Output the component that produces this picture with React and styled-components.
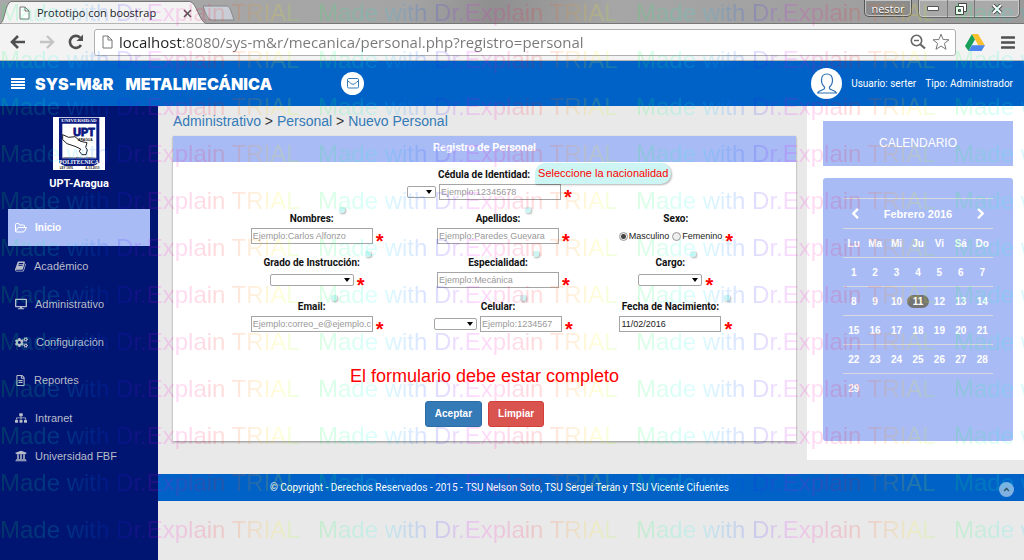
import React from 'react';
import styled, { createGlobalStyle, css } from 'styled-components';
import {
  FaDesktop, FaCogs, FaRegFileAlt, FaSitemap, FaUniversity, FaAngleUp,
} from 'react-icons/fa';

const c = {
  blue: '#0062c6',
  navy: '#001472',
  soft: '#a9bbf5',
  page: '#e9e9e9',
  link: '#337ab7',
  hint: '#cdf5f3',
};

const Global = createGlobalStyle`
  *, *::before, *::after { box-sizing: border-box; }
  body { margin: 0; font-family: "Liberation Sans", Arial, sans-serif; font-size: 11px; background: ${c.page}; }
  button, input, select { font-family: inherit; margin: 0; }
  svg { display: block; flex: none; }
`;

const Page = styled.div`
  position: relative;
  min-height: 100vh;
  display: flex;
  flex-direction: column;
  overflow: hidden;
`;

/* ---------- browser frame ---------- */
const TabStrip = styled.div`
  display: flex;
  align-items: flex-start;
  height: 24px;
  padding-right: 4px;
  background: linear-gradient(100deg, #a9a9a9 0%, #a4a4a4 40%, #8f8f8f 48%, #a6a6a6 60%, #9a9a9a 100%);
  border-bottom: 1px solid #777;
`;
const TabShape = styled.div`
  position: relative;
  width: 208px;
  height: 24px;
  display: flex;
  align-items: center;
  gap: 7px;
  padding: 2px 16px 0 19px;
  font: 11px/20px "Open Sans", "Noto Sans", sans-serif;
  color: #222;
`;
const TabOutline = styled.svg`
  position: absolute;
  left: 0;
  top: 0;
`;
const SheetIcon = styled.svg`
  position: relative;
`;
const TabTitle = styled.span`
  position: relative;
  flex: 1;
  white-space: nowrap;
`;
const IconButton = styled.button`
  position: relative;
  display: flex;
  align-items: center;
  justify-content: center;
  padding: 0;
  border: 0;
  background: none;
  color: ${p => p.$color || '#555'};
`;
const UserChip = styled.button`
  height: 17px;
  width: 48px;
  margin: 0 6px 0 auto;
  padding: 0;
  border: 1px solid #555;
  border-top: 0;
  border-radius: 0 0 5px 5px;
  background: #8c8c8c;
  box-shadow: inset 0 0 0 1px #c4c4c4;
  color: #fff;
  font: 11px/15px "Open Sans", sans-serif;
  text-shadow: 0 1px 1px #333;
`;
const WindowButtons = styled.div`
  display: flex;
  height: 18px;
  border: 1px solid #666;
  border-top: 0;
  border-radius: 0 0 5px 5px;
  background: #a9a9a9;
  box-shadow: inset 0 0 0 1px #c9c9c9;
`;
const WindowButton = styled(IconButton)`
  width: ${p => p.$w}px;
  & + & { border-left: 1px solid #7a7a7a; }
`;
const Toolbar = styled.div`
  display: flex;
  align-items: center;
  height: 37px;
  padding: 0 9px 0 10px;
  background: #f3f3f3;
  border-bottom: 1px solid #b5b5b5;
`;
const NavButtons = styled.div`
  display: flex;
  gap: 13px;
  margin-right: 10px;
`;
const AddressBox = styled.div`
  flex: 1;
  display: flex;
  align-items: center;
  gap: 6px;
  height: 27px;
  padding: 0 5px 0 7px;
  background: #fff;
  border: 1px solid #b0b0b0;
  border-radius: 3px;
`;
const Address = styled.input`
  flex: 1;
  min-width: 0;
  height: 24px;
  padding: 0;
  border: 0;
  outline: 0;
  font: 15px/24px "Open Sans", "Noto Sans", sans-serif;
  color: transparent;
  background: linear-gradient(90deg, #222 63px, #777 63px);
  -webkit-background-clip: text;
  background-clip: text;
`;
const ToolbarEnd = styled.div`
  display: flex;
  align-items: center;
  gap: 16px;
  margin-left: 9px;
`;

/* ---------- application ---------- */
const Header = styled.header`
  display: flex;
  align-items: center;
  height: 45px;
  padding: 0 11px;
  background: ${c.blue};
  color: #fff;
`;
const Brand = styled.h1`
  display: flex;
  gap: 12px;
  margin: 0 69px 0 10px;
  font: 900 16px/20px Inter, "Liberation Sans", sans-serif;
  white-space: nowrap;
`;
const Round = styled.button`
  display: flex;
  align-items: center;
  justify-content: center;
  width: ${p => p.$size}px;
  height: ${p => p.$size}px;
  padding: 0;
  border: 0;
  border-radius: 50%;
  background: #fff;
  color: ${c.link};
`;
const UserInfo = styled.div`
  display: flex;
  align-items: center;
  gap: 9px;
  margin-left: auto;
  font: 10px/14px Roboto, sans-serif;
`;

const Body = styled.div`
  flex: 1;
  display: flex;
`;
const Sidebar = styled.nav`
  width: 158px;
  flex: none;
  padding: 11px 8px;
  background: ${c.navy};
`;
const Crest = styled.div`
  display: flex;
  flex-direction: column;
  align-items: center;
  gap: 6px;
  margin-bottom: 17px;
  color: #fff;
  font: bold 11px/16px Roboto, sans-serif;
`;
const NavItem = styled.a`
  display: flex;
  align-items: center;
  gap: 8px;
  height: 38px;
  padding: 0 7px;
  color: #b9bdc9;
  font-size: 11px;
  text-decoration: none;
  ${p => p.$active && css`
    height: 37px;
    margin-bottom: 1px;
    background: ${c.soft};
    color: #fff;
    font-weight: bold;
    font-size: 10px;
  `}
`;

const Right = styled.div`
  flex: 1;
  min-width: 0;
`;
const Columns = styled.div`
  display: flex;
  align-items: flex-start;
`;
const Main = styled.main`
  flex: 1;
  min-width: 0;
  padding: 0 11px 0 15px;
`;
const Breadcrumb = styled.div`
  font-size: 14px;
  line-height: 30px;
  color: #333;
  a { color: ${c.link}; text-decoration: none; }
`;
const Card = styled.form`
  background: #fff;
  box-shadow: 0 1px 2px rgba(0, 0, 0, 0.4);
  padding-bottom: 14px;
`;
const CardTitle = styled.h2`
  margin: 0;
  padding-bottom: 3px;
  background: ${c.soft};
  color: #fff;
  text-align: center;
  font: bold 11px/23px Roboto, sans-serif;
`;
const Fields = styled.div`
  display: grid;
  grid-template-columns: 192fr 180fr 164fr;
  row-gap: 8px;
  padding: 3px 38px 0 48px;
`;
const FieldBox = styled.div`
  display: flex;
  flex-direction: column;
  align-items: center;
  ${p => p.$wide && 'grid-column: 1 / -1;'}
`;
const LabelRow = styled.div`
  display: flex;
  gap: 5px;
  height: 18px;
  font: bold 10px/20px Roboto, sans-serif;
  color: #111;
`;
const HintSlot = styled.span`
  position: relative;
  width: 6px;
`;
const Hint = styled.span`
  position: absolute;
  z-index: 1;
  left: 0;
  top: -2px;
  min-width: 6px;
  min-height: 6px;
  background: ${c.hint};
  border-radius: 2px;
  box-shadow: 1px 1px 2px rgba(0, 0, 0, 0.3);
  color: #f00;
  font: 11px/21px "Liberation Sans", Arial, sans-serif;
  white-space: nowrap;
  ${p => p.$open && 'padding: 0 3px; border-radius: 10px 10px 10px 0;'}
`;
const Controls = styled.div`
  display: flex;
  align-items: center;
  gap: 3px;
  height: 18px;
`;
const TextBox = styled.input`
  width: ${p => p.$w || 122}px;
  height: 16px;
  padding: 0 1px;
  border: 1px solid #a5a5a5;
  border-radius: 0;
  background: #fff;
  color: #222;
  font-size: 9px;
  &::placeholder { color: #999; }
`;
const SelectWrap = styled.span`
  position: relative;
  display: flex;
  &::after {
    content: '';
    position: absolute;
    right: 4px;
    top: 4px;
    border: 3px solid transparent;
    border-top: 4px solid #000;
    border-bottom: 0;
    pointer-events: none;
  }
`;
const SelectBox = styled.select`
  appearance: none;
  width: ${p => p.$w}px;
  height: 12px;
  padding: 0;
  border: 1px solid #a5a5a5;
  border-radius: 2px;
  background: #fff;
  font-size: 9px;
`;
const Star = styled.span`
  height: 18px;
  padding-top: 5px;
  color: #f00;
  font-size: 20px;
  font-weight: bold;
  line-height: 18px;
`;
const RadioLabel = styled.label`
  display: flex;
  align-items: center;
  gap: 1px;
  color: #222;
  font: 9px/18px "Liberation Sans", Arial, sans-serif;
`;
const Radio = styled.input`
  appearance: none;
  width: 9px;
  height: 9px;
  border: 1px solid #999;
  border-radius: 50%;
  background: #eee;
  &:checked { background: radial-gradient(circle, #444 2px, #eee 3px); }
`;
const Message = styled.p`
  margin: 31px 0 13px;
  text-align: center;
  color: #f00;
  font-size: 18px;
  line-height: 24px;
`;
const Actions = styled.div`
  display: flex;
  justify-content: center;
  gap: 6px;
`;
const Action = styled.button`
  height: 26px;
  padding: 0 9px;
  border: 1px solid ${p => p.$edge};
  border-radius: 3px;
  background: ${p => p.$fill};
  color: #fff;
  font: bold 10px/24px "Liberation Sans", Arial, sans-serif;
`;

const Aside = styled.aside`
  width: 217px;
  flex: none;
  display: flex;
  flex-direction: column;
  gap: 12px;
  padding: 15px 11px 19px 16px;
  background: #fff;
`;
const AsideTitle = styled.h2`
  margin: 0;
  background: ${c.soft};
  color: #fff;
  text-align: center;
  font: 12px/45px "Liberation Sans", Arial, sans-serif;
`;
const Calendar = styled.section`
  padding: 20px 20px 38px;
  border-radius: 3px;
  background: ${c.soft};
  color: #fff;
`;
const MonthBar = styled.div`
  display: flex;
  align-items: center;
  justify-content: space-between;
  height: 30px;
  padding: 0 6px;
  border-top: 1px solid #d8d8de;
  font-weight: bold;
`;
const Days = styled.table`
  width: 100%;
  table-layout: fixed;
  border-collapse: collapse;
  font-size: 10px;
  font-weight: bold;
  tr { border-top: 1px solid #d8d8de; }
  th, td { height: 29px; padding: 0; text-align: center; }
`;
const Today = styled.span`
  display: block;
  border-radius: 7px;
  background: #747474;
  line-height: 13px;
`;

const Footer = styled.footer`
  display: flex;
  align-items: center;
  height: 27px;
  margin-top: 14px;
  padding-right: 10px;
  background: ${c.blue};
  color: #fff;
  font: 10px/27px Roboto, sans-serif;
`;
const Copyright = styled.span`
  flex: 1;
  margin-right: 158px;
  text-align: center;
`;
const TopButton = styled(Round)`
  background: #80b0e2;
  color: #345;
  margin-top: 4px;
`;

const Watermark = styled.div`
  position: absolute;
  z-index: 5;
  left: 0;
  right: 0;
  top: -11px;
  bottom: 0;
  overflow: hidden;
  pointer-events: none;
  user-select: none;
  opacity: 0.14;
`;
const MarkRow = styled.div`
  display: flex;
  height: 47px;
`;
const Mark = styled.span`
  flex: none;
  width: 318px;
  font-size: 24px;
  line-height: 47px;
  white-space: nowrap;
  color: transparent;
  background: linear-gradient(90deg, #00ff40, #00ffff 19%, #0020ff 36%, #ff00ff 50%, #ff0010 68%, #ffff00 88%, #00ff40);
  -webkit-background-clip: text;
  background-clip: text;
`;

const Sheet = () => (
  <SheetIcon width="11" height="14" viewBox="0 0 11 14">
    <path d="M1 1h5l4 4v8H1z M6 1v4h4" fill="#fff" stroke="#777" />
  </SheetIcon>
);

const Logo = () => (
  <svg width="52" height="53" viewBox="0 0 156 159" role="img" aria-label="UPT Aragua">
    <path fill="#fff" d="M0 0h156v159H0z" />
    <path fill="#0a1a80" d="M18 2h121v136l-18 9H36l-18-9z" />
    <path fill="#fff" d="M28 20h102v104H28z" />
    <path d="M29 53l18 8 19-2 16 14 20 4-4 14 5 8-4 14-12 0-8-10 4-7-17-8-24-8-13-12z" fill="#fff" stroke="#222" strokeWidth="3" />
    <g fontFamily="Liberation Serif, serif" fontWeight="bold" textAnchor="middle">
      <text x="78" y="16" fontSize="15" fill="#fff">UNIVERSIDAD</text>
      <text x="78" y="142" fontSize="17" fill="#fff">POLITECNICA</text>
    </g>
    <g fontFamily="Liberation Sans, sans-serif" fontWeight="bold" textAnchor="middle" fill="#111">
      <text x="93" y="58" fontSize="32" fill="#0a1a80" stroke="#0a1a80" strokeWidth="3">UPT</text>
      <text x="97" y="72" fontSize="10">ARAGUA</text>
      <text x="79" y="122" fontSize="7">FEDERICO BRITO FIGUEROA</text>
      <text x="40" y="156" fontSize="9">LEY 1976</text>
      <text x="118" y="156" fontSize="9">A-03.2010</text>
    </g>
  </svg>
);

const Bars = () => (
  <svg width="14" height="11" viewBox="0 0 14 11"><path d="M0 1h14M0 4h14M0 7h14M0 10h14" stroke="currentColor" strokeWidth="1.800" /></svg>
);
const Envelope = () => (
  <svg width="12" height="11" viewBox="0 0 12 11" fill="none" stroke="currentColor" strokeLinejoin="round">
    <rect x=".5" y=".5" width="11" height="9.500" rx="1.200" />
    <path d="M.7 2.800C3 4.500 4.500 6.300 6 6.300s3-1.800 5.300-3.500" />
  </svg>
);
const FolderOpen = () => (
  <svg width="12" height="10" viewBox="0 0 12 10" fill="none" stroke="currentColor" strokeLinejoin="round">
    <path d="M.5 8V1.500Q.5.500 1.500.500h2Q4.500.500 4.500 2h4q1 0 1 1v1.500M.5 8.500L3 4.500h8.500L9.500 8Q9 9 8 9H1.500Q.5 9 .5 8" />
  </svg>
);
const Book = () => (
  <svg width="11" height="11" viewBox="60 100 1680 1600" fill="currentColor">
    <path d="M1703 478q40 57 18 129l-275 906q-19 64-76.500 107.500t-122.500 43.500h-923q-77 0-148.500-53.500t-99.500-131.500q-24-67-2-127 0-4 3-27t4-37q1-8-3-21.500t-3-19.500q2-11 8-21t16.500-23.500 16.500-23.500q23-38 45-91.500t30-91.500q3-10 .5-30t-.5-28q3-11 17-28t17-23q21-36 42-92t25-90q1-9-2.500-32t.5-28q4-13 22-30.500t22-22.500q19-26 42.500-84.500t27.500-96.500q1-8-3-25.500t-2-26.500q2-8 9-18t18-23 17-21q8-12 16.500-30.500t15-35 16-36 19.500-32 26.500-23.500 36-11.500 47.500 5.500l-1 3q38-9 51-9h761q74 0 114 56t18 130l-274 906q-36 119-71.500 153.500t-128.500 34.500h-869q-27 0-38 15-11 16-1 43 24 70 144 70h923q29 0 56-15.500t35-41.500l300-987q7-22 5-57 38 15 59 43zm-1064 2q-4 13 2 22.500t20 9.500h608q13 0 25.500-9.500t16.500-22.500l21-64q4-13-2-22.500t-20-9.500h-608q-13 0-25.500 9.500t-16.500 22.500zm-83 256q-4 13 2 22.500t20 9.500h608q13 0 25.500-9.500t16.500-22.500l21-64q4-13-2-22.500t-20-9.500h-608q-13 0-25.500 9.500t-16.500 22.500z" />
  </svg>
);
const Chevron = ({ d }) => (
  <svg width="12" height="12" viewBox="0 0 1792 1792" fill="currentColor"><path d={d} /></svg>
);
const chevronLeft = 'M1427 301l-531 531 531 531q19 19 19 45t-19 45l-166 166q-19 19-45 19t-45-19l-742-742q-19-19-19-45t19-45l742-742q19-19 45-19t45 19l166 166q19 19 19 45t-19 45z';
const chevronRight = 'M1363 877l-742 742q-19 19-45 19t-45-19l-166-166q-19-19-19-45t19-45l531-531-531-531q-19-19-19-45t19-45l166-166q19-19 45-19t45 19l742 742q19 19 19 45t-19 45z';

const navItems = [
  ['Inicio', FolderOpen, 12],
  ['Académico', Book, 11],
  ['Administrativo', FaDesktop, 12],
  ['Configuración', FaCogs, 13],
  ['Reportes', FaRegFileAlt, 11],
  ['Intranet', FaSitemap, 12],
  ['Universidad FBF', FaUniversity, 12],
];

function Field({ id, label, wide, hint, noHint, children }) {
  return (
    <FieldBox $wide={wide}>
      <LabelRow>
        <label htmlFor={id}>{label}</label>
        {!noHint && <HintSlot><Hint $open={!!hint}>{hint}</Hint></HintSlot>}
      </LabelRow>
      <Controls>{children}<Star>*</Star></Controls>
    </FieldBox>
  );
}

const Select = ({ id, w, name }) => (
  <SelectWrap><SelectBox id={id} $w={w} aria-label={name}><option value="" /></SelectBox></SelectWrap>
);

const weeks = [1, 8, 15, 22, 29].map(s => Array.from({ length: 7 }, (_, i) => (s + i <= 29 ? s + i : null)));

export default function App() {
  return (
    <Page>
      <Global />
      <TabStrip>
        <TabShape>
          <TabOutline width="240" height="24" viewBox="0 0 240 24">
            <path d="M0 24C5 22 5 3 11 1.500H190C197 3 199 22 207 24z" fill="#f3f3f3" stroke="#777" />
            <path d="M203 6h24c3 0 5 8 7 14h-22c-5 0-7-9-9-14z" fill="#c9ced6" stroke="#888" />
          </TabOutline>
          <Sheet />
          <TabTitle>Prototipo con boostrap</TabTitle>
          <IconButton aria-label="Cerrar pestaña">
            <svg width="9" height="9" viewBox="0 0 9 9"><path d="M1 1l7 7M8 1L1 8" stroke="#555" strokeWidth="1.600" /></svg>
          </IconButton>
        </TabShape>
        <UserChip>nestor</UserChip>
        <WindowButtons>
          <WindowButton $w={28} aria-label="Minimizar">
            <svg width="12" height="5" viewBox="0 0 12 5"><path d="M.5.5h11v4H.5z" fill="#fff" stroke="#555" /></svg>
          </WindowButton>
          <WindowButton $w={27} aria-label="Restaurar">
            <svg width="12" height="12" viewBox="0 0 12 12" fill="#fff" stroke="#444"><path d="M3.500.5h8v8h-8z" /><path d="M.5 3.500h8v8h-8z" /><path d="M3.500 6.500h2v2h-2z" fill="#888" /></svg>
          </WindowButton>
          <WindowButton $w={45} aria-label="Cerrar">
            <svg width="12" height="10" viewBox="0 0 12 10"><path d="M2 1l8 8M10 1L2 9" stroke="#444" strokeWidth="4" /><path d="M2 1l8 8M10 1L2 9" stroke="#fff" strokeWidth="2.200" /></svg>
          </WindowButton>
        </WindowButtons>
      </TabStrip>
      <Toolbar>
        <NavButtons>
          <IconButton aria-label="Atrás">
            <svg width="16" height="14" viewBox="0 0 16 14" fill="none" stroke="#505050" strokeWidth="2.600"><path d="M15 7H2M8 1L2 7l6 6" /></svg>
          </IconButton>
          <IconButton aria-label="Adelante">
            <svg width="16" height="14" viewBox="0 0 16 14" fill="none" stroke="#c4c4c4" strokeWidth="2.400"><path d="M1 7h13M8 1l6 6-6 6" /></svg>
          </IconButton>
          <IconButton aria-label="Recargar">
            <svg width="16" height="16" viewBox="0 0 16 16"><path d="M13 11A6 6 0 1 1 12 3.500" fill="none" stroke="#505050" strokeWidth="2.600" /><path d="M15 .5V7H8.500z" fill="#505050" /></svg>
          </IconButton>
        </NavButtons>
        <AddressBox>
          <Sheet />
          <Address aria-label="Dirección" defaultValue="localhost:8080/sys-m&r/mecanica/personal.php?registro=personal" />
          <IconButton aria-label="Zoom">
            <svg width="16" height="16" viewBox="0 0 16 16" fill="none" stroke="#666"><circle cx="6.500" cy="6.500" r="5.200" strokeWidth="1.600" /><path d="M4 6.500h5" strokeWidth="1.400" /><path d="M10.500 10.500l4.500 4" strokeWidth="2.200" /></svg>
          </IconButton>
          <IconButton aria-label="Favorito">
            <svg width="18" height="18" viewBox="0 0 18 18"><path d="M9 1.200l2.100 5.300 5.900.3-4.600 3.600 1.600 5.900L9 13l-5 3.300 1.600-5.900L1 6.800l5.900-.3z" fill="#fff" stroke="#777" /></svg>
          </IconButton>
        </AddressBox>
        <ToolbarEnd>
          <IconButton aria-label="Drive">
            <svg width="20" height="17" viewBox="0 0 20 17"><path d="M7 0L0 12l3.500 5L10 5.500z" fill="#1a9f5a" /><path d="M7 0h6l7 11.500h-6.500z" fill="#fbc02e" /><path d="M7 11.300h13L16.500 17h-13z" fill="#4a86ee" /></svg>
          </IconButton>
          <IconButton aria-label="Menú">
            <svg width="14" height="13" viewBox="0 0 14 13"><path d="M1 1.500h12M1 6.500h12M1 11.500h12" stroke="#505050" strokeWidth="2.600" strokeLinecap="round" /></svg>
          </IconButton>
        </ToolbarEnd>
      </Toolbar>

      <Header>
        <IconButton $color="#fff" aria-label="Menú lateral"><Bars /></IconButton>
        <Brand><span>SYS-M&amp;R</span><span>METALMECÁNICA</span></Brand>
        <Round $size={23} aria-label="Mensajes"><Envelope /></Round>
        <UserInfo>
          <Round $size={31} aria-label="Perfil">
            <svg width="20" height="22" viewBox="0 0 20 22" fill="none" stroke="#2c6fb5" strokeWidth="1.200">
              <path d="M10 1C6.500 1 4.500 3.500 4.500 7c0 3 1 5.500 3 7v1.500c0 1.500-6 1.500-6.800 4.500h18.600c-.8-3-6.800-3-6.800-4.500V14c2-1.500 3-4 3-7 0-3.500-2-6-5.500-6z" />
            </svg>
          </Round>
          <span>Usuario: serter</span>
          <span>Tipo: Administrador</span>
        </UserInfo>
      </Header>

      <Body>
        <Sidebar>
          <Crest><Logo /><span>UPT-Aragua</span></Crest>
          {navItems.map(([name, Icon, size], i) => (
            <NavItem key={name} href="#" $active={i === 0}><Icon size={size} />{name}</NavItem>
          ))}
        </Sidebar>

        <Right>
          <Columns>
            <Main>
              <Breadcrumb>
                <a href="#">Administrativo</a> &gt; <a href="#">Personal</a> &gt; <a href="#">Nuevo Personal</a>
              </Breadcrumb>
              <Card onSubmit={e => e.preventDefault()}>
                <CardTitle>Registro de Personal</CardTitle>
                <Fields>
                  <Field id="cedula" label="Cédula de Identidad:" wide hint="Seleccione la nacionalidad">
                    <Select w={29} name="Nacionalidad" />
                    <TextBox id="cedula" placeholder="Ejemplo:12345678" />
                  </Field>
                  <Field id="nombres" label="Nombres:"><TextBox id="nombres" placeholder="Ejemplo:Carlos Alfonzo" /></Field>
                  <Field id="apellidos" label="Apellidos:"><TextBox id="apellidos" placeholder="Ejemplo:Paredes Guevara" /></Field>
                  <Field id="masculino" label="Sexo:" noHint>
                    <RadioLabel><Radio id="masculino" type="radio" name="sexo" defaultChecked />Masculino</RadioLabel>
                    <RadioLabel><Radio type="radio" name="sexo" />Femenino</RadioLabel>
                  </Field>
                  <Field id="grado" label="Grado de Instrucción:"><Select id="grado" w={84} /></Field>
                  <Field id="especialidad" label="Especialidad:"><TextBox id="especialidad" placeholder="Ejemplo:Mecánica" /></Field>
                  <Field id="cargo" label="Cargo:"><Select id="cargo" w={64} /></Field>
                  <Field id="email" label="Email:"><TextBox id="email" placeholder="Ejemplo:correo_e@ejemplo.com" /></Field>
                  <Field id="celular" label="Celular:">
                    <Select w={43} name="Código" />
                    <TextBox id="celular" $w={82} placeholder="Ejemplo:1234567" />
                  </Field>
                  <Field id="fecha" label="Fecha de Nacimiento:"><TextBox id="fecha" $w={102} defaultValue="11/02/2016" /></Field>
                </Fields>
                <Message>El formulario debe estar completo</Message>
                <Actions>
                  <Action type="submit" $fill="#337ab7" $edge="#2e6da4">Aceptar</Action>
                  <Action type="reset" $fill="#d9534f" $edge="#d43f3a">Limpiar</Action>
                </Actions>
              </Card>
            </Main>
            <Aside>
              <AsideTitle>CALENDARIO</AsideTitle>
              <Calendar>
                <MonthBar>
                  <IconButton $color="#fff" aria-label="Mes anterior"><Chevron d={chevronLeft} /></IconButton>
                  <span>Febrero 2016</span>
                  <IconButton $color="#fff" aria-label="Mes siguiente"><Chevron d={chevronRight} /></IconButton>
                </MonthBar>
                <Days>
                  <thead>
                    <tr>{['Lu', 'Ma', 'Mi', 'Ju', 'Vi', 'Sá', 'Do'].map(d => <th key={d}>{d}</th>)}</tr>
                  </thead>
                  <tbody>
                    {weeks.map((w, i) => (
                      <tr key={i}>{w.map((d, j) => <td key={j}>{d === 11 ? <Today>{d}</Today> : d}</td>)}</tr>
                    ))}
                  </tbody>
                </Days>
              </Calendar>
            </Aside>
          </Columns>
          <Footer>
            <Copyright>© Copyright - Derechos Reservados - 2015 - TSU Nelson Soto, TSU Sergei Terán y TSU Vicente Cifuentes</Copyright>
            <TopButton $size={15} aria-label="Subir"><FaAngleUp size={9} /></TopButton>
          </Footer>
        </Right>
      </Body>

      <Watermark aria-hidden="true">
        {Array.from({ length: 12 }, (_, r) => (
          <MarkRow key={r}>
            {Array.from({ length: 4 }, (_, k) => <Mark key={k}>Made with Dr.Explain TRIAL</Mark>)}
          </MarkRow>
        ))}
      </Watermark>
    </Page>
  );
}
